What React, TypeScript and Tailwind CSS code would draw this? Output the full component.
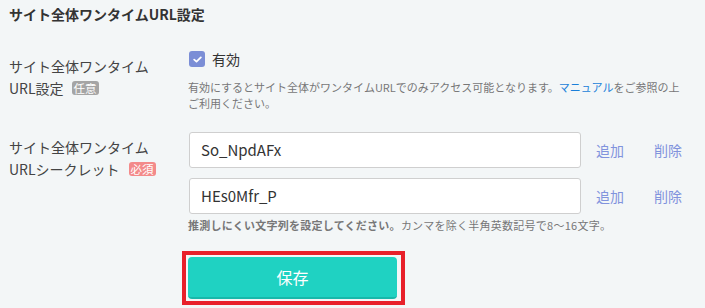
import React from "react";

const font = { fontFamily: '"Noto Sans CJK JP", "Noto Sans", sans-serif' };

export default function App() {
  return (
    <div
      className="w-[705px] h-[308px] overflow-hidden bg-[#f3f6f7] text-[#444] pl-[9px]"
      style={font}
    >
      <div className="pt-[4px] text-[14px] leading-[20px] font-bold text-[#333]">
        サイト全体ワンタイムURL設定
      </div>

      {/* Row 1 */}
      <div className="mt-[26px] flex">
        <div className="w-[180px] pt-[5px] text-[14px] leading-[22px]">
          <div>サイト全体ワンタイム</div>
          <div className="flex items-center">
            <span>URL設定</span>
            <span className="ml-[8px] rounded-[3px] bg-[#a5a5a5] px-[2px] text-[11.5px] leading-[14px] text-white">
              任意
            </span>
          </div>
        </div>
        <div className="flex-1">
          <div className="flex items-center h-[18px]">
            <span className="flex h-[16px] w-[16px] items-center justify-center rounded-[3px] bg-[#7b8ed6]">
              <svg width="9" height="7" viewBox="0 0 9 7">
                <path
                  d="M1.2 3.6 L3.5 5.6 L7.8 1.4"
                  fill="none"
                  stroke="white"
                  strokeWidth="1.8"
                  strokeLinecap="round"
                  strokeLinejoin="round"
                />
              </svg>
            </span>
            <span className="ml-[7px] text-[14px] leading-[18px] text-[#333]">有効</span>
          </div>
          <div className="ml-[-1px] mt-[11px] text-[11px] leading-[16px] text-[#777]">
            有効にするとサイト全体がワンタイムURLでのみアクセス可能となります。
            <span className="text-[#1a7fd9]">マニュアル</span>
            をご参照の上
            <br />
            ご利用ください。
          </div>
        </div>
      </div>

      {/* Row 2 */}
      <div className="mt-[21px] flex">
        <div className="w-[180px] pt-[4px] text-[14px] leading-[22px]">
          <div>サイト全体ワンタイム</div>
          <div className="flex items-center">
            <span>URLシークレット</span>
            <span className="ml-[9px] rounded-[3px] bg-[#f38a8a] px-[2px] text-[11.5px] leading-[14px] text-white">
              必須
            </span>
          </div>
        </div>
        <div className="flex-1">
          {["So_NpdAFx", "HEs0Mfr_P"].map((v, i) => (
            <div key={i} className={"flex items-center " + (i > 0 ? "mt-[10px]" : "")}>
              <div className="flex h-[36px] w-[392px] items-center rounded-[3px] border border-[#cfcfcf] bg-white px-[11px] text-[15px] text-[#333]">
                {v}
              </div>
              <span className="ml-[15px] text-[14px] text-[#8193dd]">追加</span>
              <span className="ml-[30px] text-[14px] text-[#8193dd]">削除</span>
            </div>
          ))}
          <div className="ml-[-1px] mt-[3px] text-[11px] leading-[16px] tracking-[0.25px] text-[#777]">
            <span className="font-bold">推測しにくい文字列を設定してください。</span>
            カンマを除く半角英数記号で8〜16文字。
          </div>
          <div className="ml-[-7px] mt-[18px] inline-flex border-[4px] border-[#e8202a] p-[2px] pr-[4px]">
            <div className="flex h-[42px] w-[209px] items-center justify-center rounded-[4px] border-b-[2px] border-[#18b8aa] bg-[#1fd2c2] text-[16px] text-white">
              保存
            </div>
          </div>
        </div>
      </div>
    </div>
  );
}
